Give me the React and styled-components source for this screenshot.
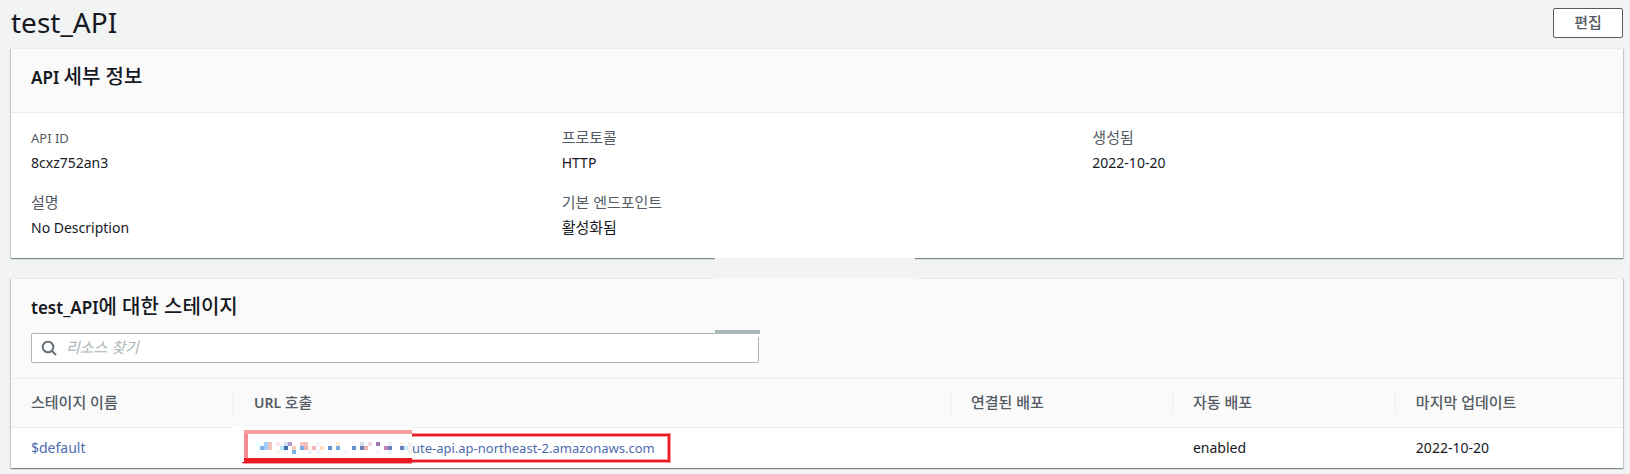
import styled, { createGlobalStyle } from 'styled-components'

const GlobalStyle = createGlobalStyle`
  * {
    box-sizing: border-box;
  }

  body {
    margin: 0;
    background: #f2f3f3;
    color: #16191f;
    font-family: 'Noto Sans', 'Noto Sans CJK KR', sans-serif;
    font-size: 13px;
    line-height: 22px;
  }
`

const Page = styled.main`
  display: flex;
  flex-direction: column;
  gap: 20px;
  padding: 0 7px 5px 11px;
`

const PageHeader = styled.header`
  display: flex;
  align-items: center;
  justify-content: space-between;
  height: 46px;
  margin-bottom: -18px;

  h1 {
    margin: 0;
    padding-bottom: 2px;
    font-size: 28px;
    font-weight: 400;
    line-height: 36px;
  }
`

const Korean = styled.span.attrs({ lang: 'ko' })`
  font-size: ${({ $size = 15 }) => $size}px;
  font-weight: ${({ $weight = 400 }) => $weight};
  line-height: 1;
`

const EditButton = styled.button`
  min-width: 70px;
  height: 30px;
  padding: 0 20px;
  border: 1px solid #545b64;
  border-radius: 2px;
  background: #fff;
  color: #545b64;
  font: inherit;
`

const Panel = styled.section`
  position: relative;
  border-top: 1px solid #eaeded;
  background: #fff;
  box-shadow:
    0 1px 1px 0 rgba(0, 28, 36, 0.3),
    1px 1px 1px 0 rgba(0, 28, 36, 0.15),
    -1px 1px 1px 0 rgba(0, 28, 36, 0.15);
`

const PanelHeader = styled.div`
  padding: 17px 20px ${({ $bottom }) => $bottom}px;
  border-bottom: 1px solid #eaeded;
  background: #fafafa;

  h2 {
    height: 24px;
    margin: 0;
    font-size: 17px;
    font-weight: 600;
    line-height: 24px;
    white-space: nowrap;
  }
`

const Details = styled.dl`
  display: grid;
  grid-template-columns: repeat(3, 1fr);
  gap: 18px 20px;
  margin: 0;
  padding: 14px 20px 19px;

  dt {
    height: 22px;
    margin-bottom: 3px;
    color: #545b64;
  }

  dd {
    height: 22px;
    margin: 0;
    font-size: 14px;
  }
`

const SearchBox = styled.label`
  display: flex;
  align-items: center;
  gap: 9px;
  height: 30px;
  margin-top: 13px;
  padding: 0 9px;
  border: 1px solid #aab7b8;
  border-radius: 2px;
  background: #fff;

  input {
    flex: 1;
    height: 26px;
    padding: 0 0 2px;
    border: 0;
    outline: 0;
    background: transparent;
    font: inherit;
    font-size: 15px;
  }

  input::placeholder {
    color: #aab7b8;
    font-style: italic;
  }
`

const StageTable = styled.table`
  width: 100%;
  border-collapse: separate;
  border-spacing: 0;
  table-layout: fixed;

  th {
    height: 49px;
    padding: 0;
    border-bottom: 1px solid #eaeded;
    background: #fafafa;
    color: #545b64;
    font-size: 14px;
    font-weight: 600;
    text-align: left;
  }

  td {
    height: 40px;
    padding: 0 20px;
    font-size: 14px;
    white-space: nowrap;
  }
`

const HeadLabel = styled.div`
  height: 24px;
  padding: 1px 20px 0;
  border-right: 1px solid ${({ $last }) => ($last ? 'transparent' : '#eaeded')};
`

const Link = styled.a`
  color: #4d6bb0;
  text-decoration: none;
`

const UrlCell = styled.td`
  position: relative;
`

const UrlLink = styled(Link)`
  display: block;
  padding-left: 158px;
  font-size: 13px;
`

const Frame = styled.span`
  position: absolute;
  top: 6px;
  left: 178px;
  width: 258px;
  height: 28px;
  border: 2px solid #ed1c24;
  border-left: 0;
  box-shadow: inset -1px 0 #f5989d, inset 0 1px #f5989d, inset 0 -1px #f5989d, 0 0 0 1px #f5989d;
  pointer-events: none;
`

const Mosaic = styled.svg`
  position: absolute;
  top: -2px;
  left: -3px;
`

// Covers the seam between the two panels
const Seam = styled.div`
  position: absolute;
  top: -21px;
  left: 704px;
  width: 200px;
  height: 22px;
  border-bottom: 2px solid #fafafa;
  background: #f2f3f3;
`

const SearchArea = styled.div`
  position: relative;
  width: 728px;
  max-width: 100%;
`

const Bar = styled.span`
  position: absolute;
  top: -3px;
  right: -1px;
  width: 45px;
  height: 7px;
  border-top: 4px solid #aab7b8;
  background: #fff;
`

const details = [
  ['API ID', '8cxz752an3'],
  [<Korean>프로토콜</Korean>, 'HTTP'],
  [<Korean>생성됨</Korean>, '2022-10-20'],
  [<Korean>설명</Korean>, 'No Description'],
  [<Korean>기본 엔드포인트</Korean>, <Korean>활성화됨</Korean>],
]

const columns = [
  { korean: '스테이지 이름', width: '13.83%' },
  { latin: 'URL ', korean: '호출', width: '44.48%' },
  { korean: '연결된 배포', width: '13.77%' },
  { korean: '자동 배포', width: '13.83%' },
  { korean: '마지막 업데이트', width: '14.09%' },
]

// column, row and colour of each 4px cell
const cells = [
  [0, 0, '#e6ffff'], [1, 1, '#7ab3e8'], [2, 0, '#9fcfff'], [2, 1, '#9fcfff'], [3, 0, '#f0bfc0'], [3, 1, '#f0bfc0'],
  [5, 0, '#fae8e4'], [5, 2, '#fff6ee'], [6, 1, '#b8ecff'], [7, 0, '#d5e0f0'], [7, 1, '#3c6eb4'], [8, 0, '#b09cc8'],
  [7, 2, '#f0f6ff'], [9, 1, '#fac8c0'], [9, 2, '#78b0e8'], [11, 0, '#f8c8c0'], [11, 1, '#78b0e8'], [12, 0, '#f0bfc0'],
  [12, 1, '#f0b4b8'], [13, 1, '#fff6e4'], [13, 2, '#eef4fc'], [14, 1, '#f0b4b8'], [15, 0, '#f0f2f8'], [15, 2, '#f0f6ff'],
  [16, 1, '#ffdcc4'], [18, 1, '#5a8ed0'], [20, 0, '#ffecd0'], [20, 1, '#78b0e8'], [22, 2, '#f0f6ff'], [24, 1, '#5a8ed0'],
  [26, 0, '#d8dfec'], [26, 1, '#6c80b8'], [27, 1, '#f0b4b8'], [28, 0, '#ead8dc'], [30, 0, '#a07cb4'], [30, 2, '#f0f6ff'],
  [32, 1, '#bc84b8'], [33, 0, '#ecf2f8'], [33, 1, '#6c80b8'], [33, 2, '#eef4fc'], [36, 0, '#faf4f0'], [36, 1, '#6c80b8'],
  [37, 1, '#c0ecff'], [38, 0, '#f2f0f0'], [38, 1, '#faf4f0'], [38, 2, '#f2f0f0'],
]

const App = () => (
  <>
    <GlobalStyle />
    <Page>
      <PageHeader>
        <h1>test_API</h1>
        <EditButton type="button">
          <Korean $weight={500}>편집</Korean>
        </EditButton>
      </PageHeader>

      <Panel>
        <PanelHeader $bottom={22}>
          <h2>
            API{' '}
            <Korean $size={20} $weight={500}>
              세부 정보
            </Korean>
          </h2>
        </PanelHeader>
        <Details>
          {details.map(([label, value], index) => (
            <div key={index}>
              <dt>{label}</dt>
              <dd>{value}</dd>
            </div>
          ))}
        </Details>
      </Panel>

      <Panel>
        <Seam />
        <PanelHeader $bottom={15}>
          <h2>
            test_API
            <Korean $size={20} $weight={500}>
              에 대한 스테이지
            </Korean>
          </h2>
          <SearchArea>
            <SearchBox>
              <svg width="16" height="16" viewBox="0 0 16 16" fill="none" stroke="#687078" strokeWidth="2">
                <circle cx="7" cy="7" r="5.3" />
                <path d="M10.8 10.8 15 15" />
              </svg>
              <input type="search" placeholder="리소스 찾기" aria-label="리소스 찾기" />
            </SearchBox>
            <Bar />
          </SearchArea>
        </PanelHeader>
        <StageTable>
          <colgroup>
            {columns.map(({ korean, width }) => (
              <col key={korean} style={{ width }} />
            ))}
          </colgroup>
          <thead>
            <tr>
              {columns.map(({ latin, korean }, index) => (
                <th key={korean} scope="col">
                  <HeadLabel $last={index === columns.length - 1}>
                    {latin}
                    <Korean $weight={500}>{korean}</Korean>
                  </HeadLabel>
                </th>
              ))}
            </tr>
          </thead>
          <tbody>
            <tr>
              <td>
                <Link href="#default">$default</Link>
              </td>
              <UrlCell>
                <UrlLink href="#invoke">ute-api.ap-northeast-2.amazonaws.com</UrlLink>
                <Frame />
                <Mosaic width="181" height="38" shapeRendering="crispEdges" aria-hidden="true">
                  <rect width="181" height="38" fill="#fff" />
                  <path d="M13 4h168v4H13z" fill="#f99d9f" />
                  <path d="M13 8h4v24h-4z" fill="#f58b90" />
                  <path d="M13 32h168v5H13zM11 36h170v1H11z" fill="#ed1c24" />
                  <path d="M12 37h169v1H12z" fill="#f5989d" />
                  {cells.map(([col, row, fill]) => (
                    <rect key={`${col}-${row}`} x={25 + col * 4} y={16 + row * 4} width="4" height="4" fill={fill} />
                  ))}
                </Mosaic>
              </UrlCell>
              <td />
              <td>enabled</td>
              <td>2022-10-20</td>
            </tr>
          </tbody>
        </StageTable>
      </Panel>
    </Page>
  </>
)

export default App
